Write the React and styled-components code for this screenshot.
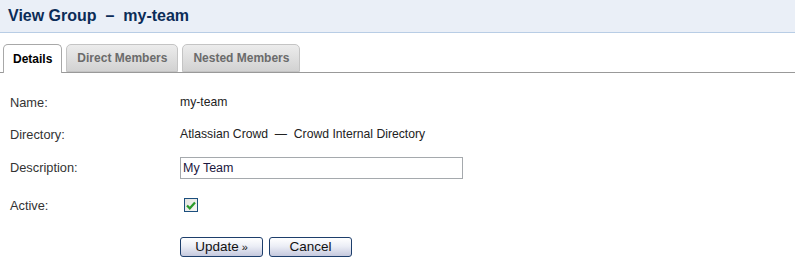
import styled, { createGlobalStyle } from 'styled-components';

const Global = createGlobalStyle`
body{
  margin:0;
  background:white;
  font-family:"Liberation Sans", Arial, sans-serif;
}
`;

const Page = styled.div`
display:flex;
flex-direction:column;
width:795px;
`;

const Header = styled.div`
height:32px;
background:#eaeff7;
border-bottom:1px solid #b8cde5;
display:flex;
align-items:center;
padding-left:8px;
`;

const Title = styled.h1`
margin:0;
font-size:16px;
font-weight:bold;
color:#0b2c57;
white-space:pre;
`;

const TabBar = styled.div`
display:flex;
flex-direction:row;
align-items:flex-end;
gap:4px;
margin-top:10px;
padding-left:3px;
border-bottom:1px solid #999;
height:29px;
`;

const Tab = styled.div`
height:${p => (p.active ? '29px' : '28px')};
margin-bottom:${p => (p.active ? '-1px' : '0')};
box-sizing:border-box;
padding:0 ${p => (p.active ? '9px' : '10px')};
display:flex;
align-items:center;
font-size:12px;
font-weight:bold;
color:${p => (p.active ? '#000' : '#6b6b6b')};
background:${p => (p.active ? '#fff' : 'linear-gradient(#ececec, #d2d2d2)')};
border:1px solid ${p => (p.active ? '#a8a8a8' : '#c4c4c4')};
border-bottom:${p => (p.active ? 'none' : '1px solid #c4c4c4')};
border-radius:5px 5px 0 0;
`;

const Form = styled.div`
display:flex;
flex-direction:column;
padding:13px 0 0 10px;
`;

const Row = styled.div`
display:flex;
flex-direction:row;
align-items:center;
height:${p => p.h}px;
`;

const Label = styled.div`
width:170px;
font-size:12.8px;
color:#333;
`;

const Value = styled.div`
font-size:12.2px;
color:#222;
white-space:pre;
`;

const TextInput = styled.input`
width:283px;
height:22px;
margin-top:2px;
box-sizing:border-box;
border:1px solid #a5a9ad;
padding:0 2px;
font-family:"Liberation Sans", Arial, sans-serif;
font-size:12.5px;
color:#1b1840;
outline:none;
`;

const CheckBox = styled.div`
width:14px;
height:14px;
box-sizing:border-box;
margin-left:4px;
border:1px solid #1c4f7e;
background:linear-gradient(135deg, #e4e4e0, #f6f6f4);
display:flex;
align-items:center;
justify-content:center;
`;

const Buttons = styled.div`
display:flex;
flex-direction:row;
gap:6px;
padding-left:170px;
height:41px;
align-items:center;
`;

const Button = styled.button`
width:83px;
height:20px;
border:1px solid #1d3e6b;
border-radius:3px;
background:linear-gradient(#ffffff, #eceef6 45%, #c5c9de);
font-family:"Liberation Sans", Arial, sans-serif;
font-size:13.5px;
color:#111;
padding:0;
display:flex;
align-items:center;
justify-content:center;
`;

const Raquo = styled.span`
font-size:11px;
margin-left:3px;
`;

const App = () => {
  return (
    <Page>
      <Global />
      <Header>
        <Title>View Group  –  my-team</Title>
      </Header>
      <TabBar>
        <Tab active>Details</Tab>
        <Tab>Direct Members</Tab>
        <Tab>Nested Members</Tab>
      </TabBar>
      <Form>
        <Row h={32}>
          <Label>Name:</Label>
          <Value>my-team</Value>
        </Row>
        <Row h={32}>
          <Label>Directory:</Label>
          <Value>Atlassian Crowd  —  Crowd Internal Directory</Value>
        </Row>
        <Row h={34}>
          <Label>Description:</Label>
          <TextInput defaultValue="My Team" />
        </Row>
        <Row h={42}>
          <Label>Active:</Label>
          <CheckBox>
            <svg width="10" height="9" viewBox="0 0 10 9">
              <path d="M1 4.5 L3.8 7.3 L9 1.5" fill="none" stroke="#2a9a2a" strokeWidth="2.2" />
            </svg>
          </CheckBox>
        </Row>
        <Buttons>
          <Button>Update<Raquo>»</Raquo></Button>
          <Button>Cancel</Button>
        </Buttons>
      </Form>
    </Page>
  );
};

export default App;
